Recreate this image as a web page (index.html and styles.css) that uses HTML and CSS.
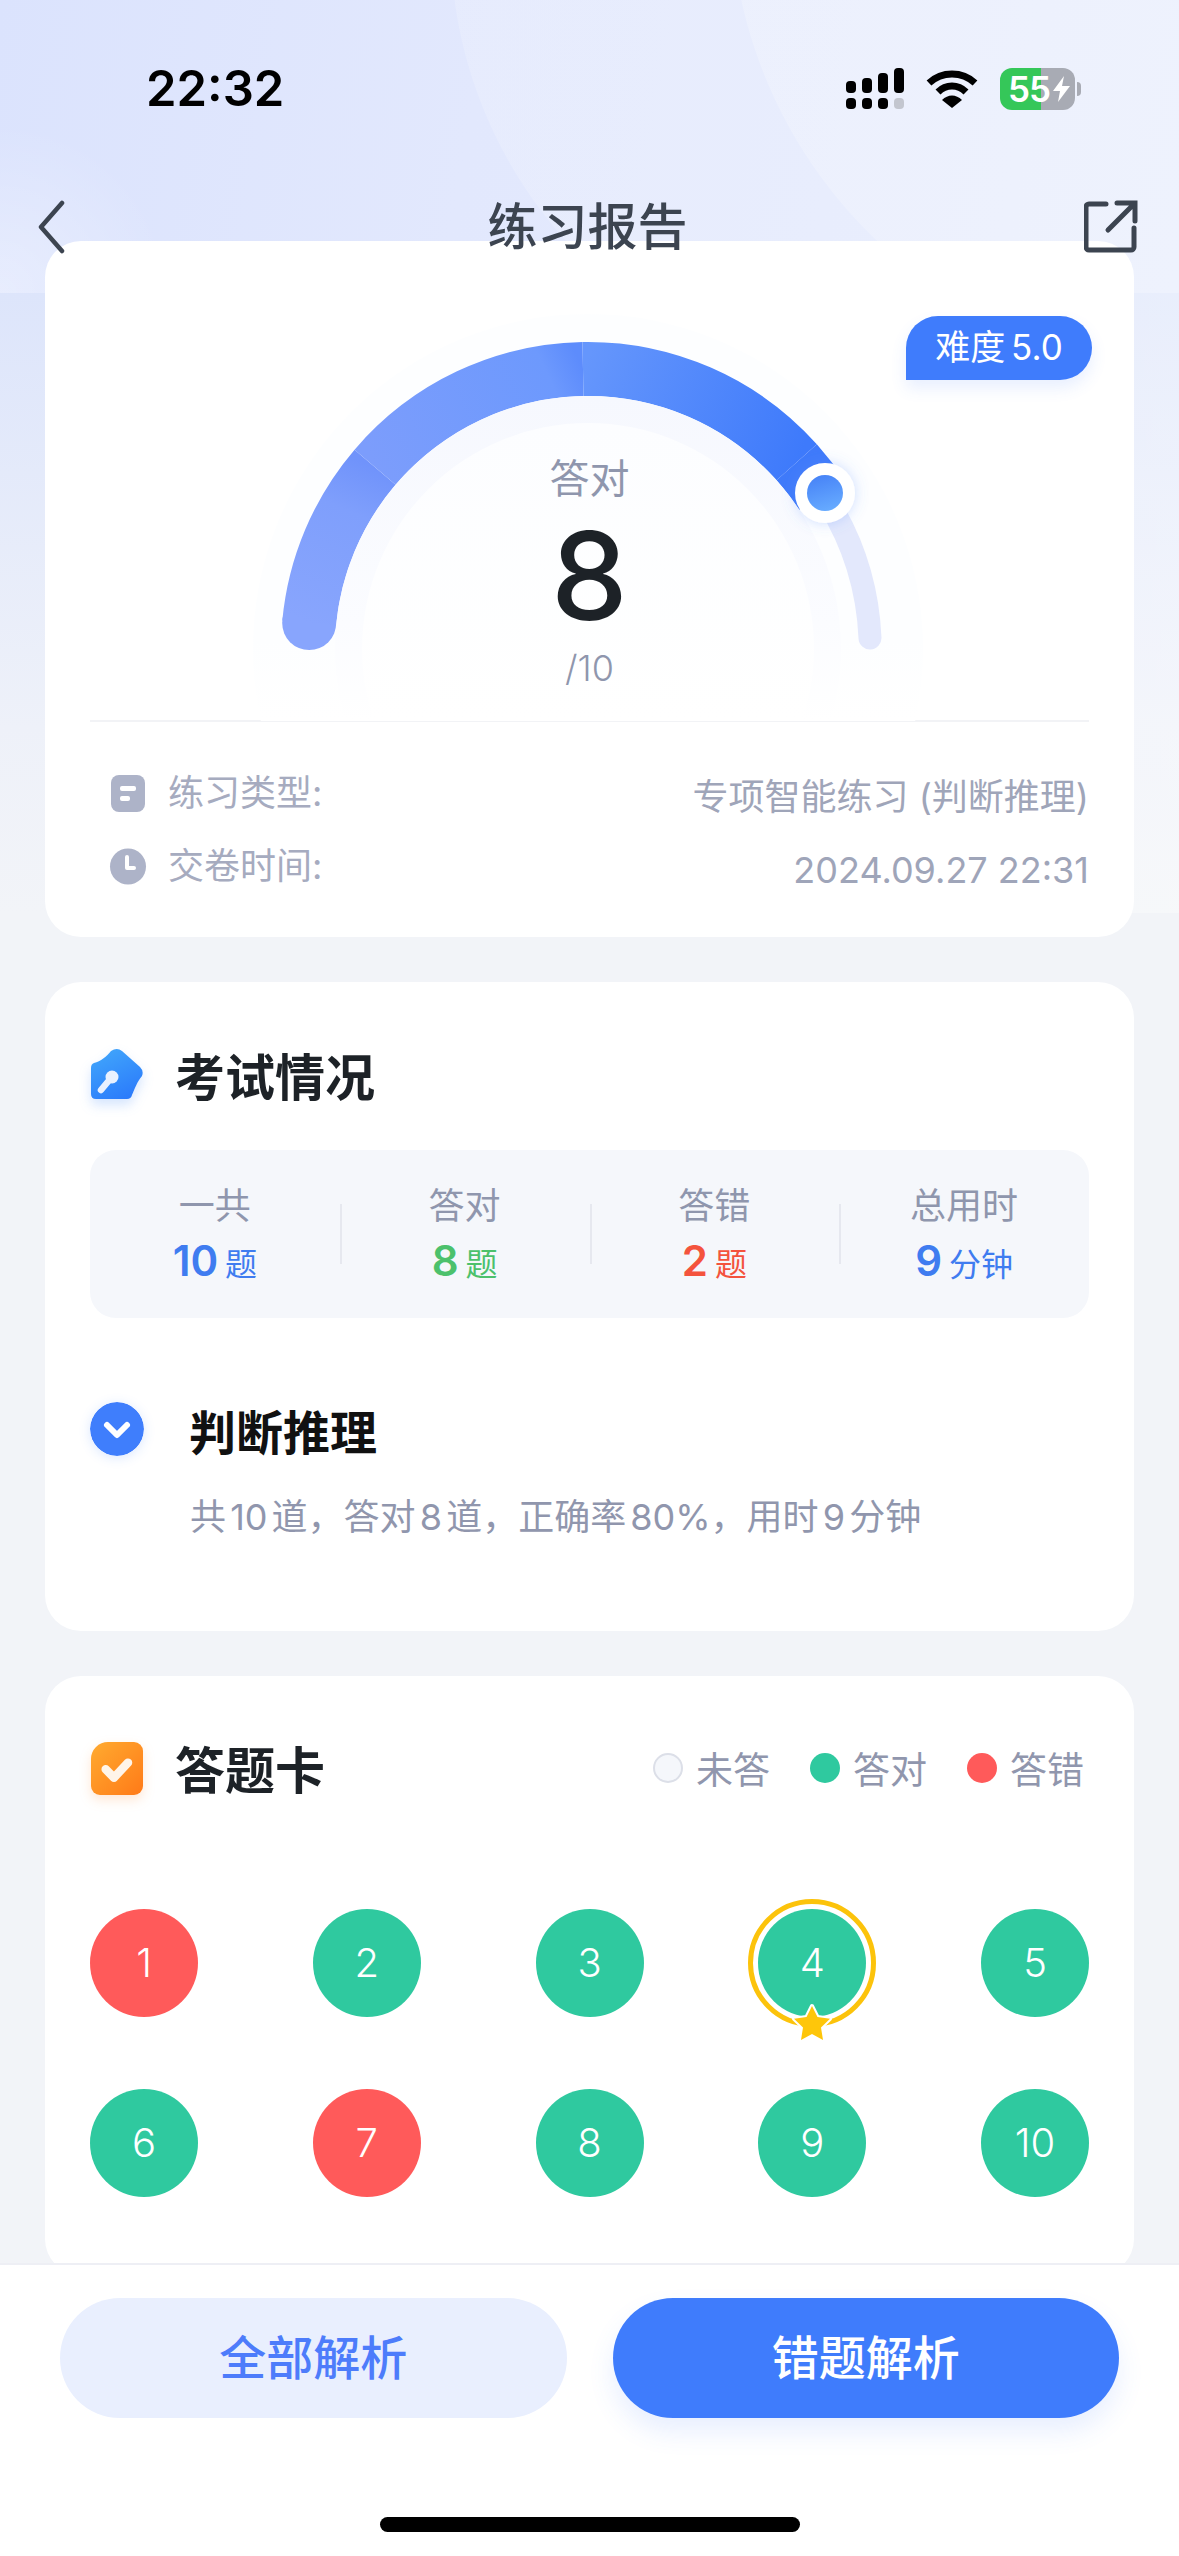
FILE: index.html
```html
<!DOCTYPE html>
<html lang="zh-CN">
<head>
    <meta charset="UTF-8">
    <title>练习报告</title>
    <link rel="stylesheet" href="styles.css">
</head>
<body>
<div id="page">
    <div class="top">
        <div class="status">
            <span class="clock">22:32</span>
            <div class="status-icons">
                <svg class="signal" width="60" height="42" viewBox="0 0 60 42">
                    <rect x="0" y="13" width="10" height="12" rx="4"/>
                    <rect x="16" y="10" width="10" height="15" rx="4"/>
                    <rect x="32" y="5" width="10" height="20" rx="4"/>
                    <rect x="48" y="0" width="10" height="25" rx="4"/>
                    <rect x="0" y="30" width="10" height="11" rx="4"/>
                    <rect x="16" y="30" width="10" height="11" rx="4"/>
                    <rect x="32" y="30" width="10" height="11" rx="4"/>
                    <rect x="48" y="30" width="10" height="11" rx="4" fill="#c3c6cf"/>
                </svg>
                <svg class="wifi" width="52" height="38" viewBox="0 0 52 38">
                    <path d="M3 13 C16 1 36 1 49 13" fill="none" stroke="#000" stroke-width="7"/>
                    <path d="M12 22 C20 14 32 14 40 22" fill="none" stroke="#000" stroke-width="7"/>
                    <path d="M16 30 C22 24 30 24 36 30 L26 38 Z"/>
                </svg>
                <div class="battery">
                    <div class="battery-body">
                        <span class="battery-num">55</span>
                        <svg class="bolt" width="17" height="26" viewBox="0 0 17 26"><path d="M11 0 L0 15 H7 L5 26 L17 10 H9 Z" fill="#fff"/></svg>
                    </div>
                    <i class="battery-tip"></i>
                </div>
            </div>
        </div>
        <div class="nav">
            <svg class="nav-back" width="28" height="54" viewBox="0 0 28 54"><path d="M25 3 L4 27 L25 51" fill="none" stroke="#3c4450" stroke-width="4.5" stroke-linecap="round" stroke-linejoin="round"/></svg>
            <h1 class="nav-title">练习报告</h1>
            <svg class="nav-share" width="54" height="54" viewBox="0 0 54 54">
                <path d="M22 4 H5 a3 3 0 0 0 -3 3 V47 a3 3 0 0 0 3 3 H47 a3 3 0 0 0 3 -3 V28" fill="none" stroke="#3c4450" stroke-width="5" stroke-linecap="round"/>
                <path d="M24 30 L49 5 M33 3 H51 V21" fill="none" stroke="#3c4450" stroke-width="5" stroke-linecap="round"/>
            </svg>
        </div>
    </div>

    <div class="main">
        <section class="card card-report">
            <div class="gauge">
                <svg class="gauge-bg" width="1089" height="480" viewBox="0 0 1089 480">
                    <defs>
                        <linearGradient id="fade1" gradientUnits="userSpaceOnUse" x1="0" y1="70" x2="0" y2="480">
                            <stop offset="0" stop-color="#fdfeff"/><stop offset="0.8" stop-color="#fdfeff"/><stop offset="1" stop-color="#fff"/>
                        </linearGradient>
                        <linearGradient id="fade2" gradientUnits="userSpaceOnUse" x1="0" y1="155" x2="0" y2="480">
                            <stop offset="0" stop-color="#f6f8fe"/><stop offset="0.7" stop-color="#fbfcff"/><stop offset="1" stop-color="#fff"/>
                        </linearGradient>
                        <linearGradient id="fade3" gradientUnits="userSpaceOnUse" x1="0" y1="182" x2="0" y2="480">
                            <stop offset="0" stop-color="#fcfdff"/><stop offset="1" stop-color="#fff"/>
                        </linearGradient>
                        <linearGradient id="seg1" gradientUnits="userSpaceOnUse" x1="264" y1="382" x2="330" y2="226">
                            <stop offset="0" stop-color="#88a5fd"/><stop offset="0.7" stop-color="#7f9ffc"/><stop offset="1" stop-color="#7093fb"/>
                        </linearGradient>
                        <linearGradient id="seg2" gradientUnits="userSpaceOnUse" x1="330" y1="226" x2="538" y2="128">
                            <stop offset="0" stop-color="#7c9dfc"/><stop offset="0.85" stop-color="#6d99fd"/><stop offset="1" stop-color="#5d8cfc"/>
                        </linearGradient>
                        <linearGradient id="seg3" gradientUnits="userSpaceOnUse" x1="538" y1="128" x2="752" y2="221">
                            <stop offset="0" stop-color="#6596fc"/><stop offset="1" stop-color="#3e7afb"/>
                        </linearGradient>
                        <linearGradient id="knob" x1="0.3" y1="0" x2="0.6" y2="1">
                            <stop offset="0" stop-color="#4783f7"/><stop offset="1" stop-color="#67abff"/>
                        </linearGradient>
                        <filter id="glow" x="-50%" y="-50%" width="200%" height="200%">
                            <feDropShadow dx="0" dy="0" stdDeviation="7" flood-color="#5b8dfb" flood-opacity="0.3"/>
                        </filter>
                    </defs>
                    <circle cx="543" cy="408" r="335" fill="url(#fade1)"/>
                    <path d="M778 253 A282 282 0 0 1 825 397" fill="none" stroke="#e3e8fc" stroke-width="23" stroke-linecap="round"/>
                    <circle cx="264.2" cy="382.1" r="27" fill="#88a5fd"/>
                    <path d="M264.2 382.1 A280 280 0 0 1 330.1 226.2" fill="none" stroke="url(#seg1)" stroke-width="54"/>
                    <path d="M330.1 226.2 A280 280 0 0 1 538 128" fill="none" stroke="url(#seg2)" stroke-width="54"/>
                    <path d="M538 128 A280 280 0 0 1 751.7 221.3" fill="none" stroke="url(#seg3)" stroke-width="54"/>
                    <path d="M751.7 221.3 A280 280 0 0 1 776.8 254" fill="none" stroke="#3f7afa" stroke-width="54"/>
                    <circle cx="543" cy="408" r="253" fill="url(#fade2)"/>
                    <circle cx="543" cy="408" r="226" fill="url(#fade3)"/>
                    <circle cx="780" cy="252" r="30" fill="#fff" filter="url(#glow)"/>
                    <circle cx="780" cy="252" r="18" fill="url(#knob)"/>
                </svg>
                <div class="badge">难度 5.0</div>
                <div class="gauge-text">
                    <span class="gauge-label">答对</span>
                    <span class="gauge-num">8</span>
                    <span class="gauge-total">/10</span>
                </div>
            </div>
            <div class="info">
                <div class="info-row">
                    <svg class="info-icon" width="34" height="37" viewBox="0 0 34 37">
                        <rect x="0" y="0" width="34" height="37" rx="8" fill="#adb3c8"/>
                        <rect x="9" y="11" width="16" height="5" rx="2" fill="#fff"/>
                        <rect x="9" y="21" width="10" height="5" rx="2" fill="#fff"/>
                    </svg>
                    <span class="info-key">练习类型:</span>
                    <span class="info-val">专项智能练习 (判断推理)</span>
                </div>
                <div class="info-row">
                    <svg class="info-icon" width="34" height="37" viewBox="0 0 34 37">
                        <circle cx="17" cy="18.5" r="18" fill="#adb3c8"/>
                        <path d="M16 9 V20 H23" fill="none" stroke="#fff" stroke-width="4" stroke-linecap="round" stroke-linejoin="round"/>
                    </svg>
                    <span class="info-key">交卷时间:</span>
                    <span class="info-val">2024.09.27 22:31</span>
                </div>
            </div>
        </section>

        <section class="card card-exam">
            <div class="card-head">
                <svg class="head-icon icon-key" width="54" height="54" viewBox="0 0 54 54">
                    <defs>
                        <linearGradient id="houseBlue" x1="0.2" y1="0" x2="0.7" y2="1">
                            <stop offset="0" stop-color="#41a6fb"/><stop offset="1" stop-color="#2b7bfb"/>
                        </linearGradient>
                    </defs>
                    <path d="M4 15 C11 13 16 9 21 3 Q27 -1 32 3 L50 19 Q54 23 52 28 C47 34 45 40 42 47 Q41 51 37 51 H6 Q1 51 1 46 V20 Q1 16 4 15 Z" fill="url(#houseBlue)"/>
                    <circle cx="22" cy="29" r="6.5" fill="#e9f1ff"/>
                    <path d="M21 30 L11 42" stroke="#e9f1ff" stroke-width="6.5" stroke-linecap="round"/>
                </svg>
                <h2 class="head-title">考试情况</h2>
            </div>
            <div class="stats">
                <div class="stat">
                    <span class="stat-label">一共</span>
                    <span class="stat-val blue"><b>10</b> 题</span>
                </div>
                <div class="stat">
                    <span class="stat-label">答对</span>
                    <span class="stat-val green"><b>8</b> 题</span>
                </div>
                <div class="stat">
                    <span class="stat-label">答错</span>
                    <span class="stat-val red"><b>2</b> 题</span>
                </div>
                <div class="stat">
                    <span class="stat-label">总用时</span>
                    <span class="stat-val blue"><b>9</b> 分钟</span>
                </div>
            </div>
            <div class="topic">
                <svg class="topic-icon" width="54" height="54" viewBox="0 0 54 54">
                    <circle cx="27" cy="27" r="27" fill="#3f7efc"/>
                    <path d="M17 23 L27 33 L37 23" fill="none" stroke="#fff" stroke-width="6" stroke-linecap="round" stroke-linejoin="round"/>
                </svg>
                <span class="topic-name">判断推理</span>
            </div>
            <p class="topic-sub">共 10 道，答对 8 道，正确率 80%，用时 9 分钟</p>
        </section>

        <section class="card card-sheet">
            <div class="card-head">
                <svg class="head-icon icon-check" width="54" height="54" viewBox="0 0 54 54">
                    <defs>
                        <linearGradient id="boxOrange" x1="0" y1="0" x2="1" y2="1">
                            <stop offset="0" stop-color="#ffab30"/><stop offset="1" stop-color="#ff7a18"/>
                        </linearGradient>
                    </defs>
                    <path d="M1 18 a17 17 0 0 1 17 -17 H44 a9 9 0 0 1 9 9 V45 a9 9 0 0 1 -9 9 H10 a9 9 0 0 1 -9 -9 Z" fill="url(#boxOrange)"/>
                    <path d="M15.7 28.3 L24 36.7 L38 21.7" fill="none" stroke="#fff" stroke-opacity="0.9" stroke-width="8.5" stroke-linecap="round" stroke-linejoin="round"/>
                </svg>
                <h2 class="head-title">答题卡</h2>
                <div class="legend">
                    <span class="legend-item"><i class="dot dot-none"></i>未答</span>
                    <span class="legend-item"><i class="dot dot-right"></i>答对</span>
                    <span class="legend-item"><i class="dot dot-wrong"></i>答错</span>
                </div>
            </div>
            <div class="sheet">
                <div class="q wrong">1</div>
                <div class="q right">2</div>
                <div class="q right">3</div>
                <div class="q right marked">4
                    <svg class="star" width="44" height="42" viewBox="0 0 44 42"><path d="M22 4 L27.5 15 L40 16.8 L31 25.5 L33 38 L22 32 L11 38 L13 25.5 L4 16.8 L16.5 15 Z" fill="#fec60a" stroke="#fff" stroke-width="4" stroke-linejoin="round" paint-order="stroke"/></svg>
                </div>
                <div class="q right">5</div>
                <div class="q right">6</div>
                <div class="q wrong">7</div>
                <div class="q right">8</div>
                <div class="q right">9</div>
                <div class="q right">10</div>
            </div>
        </section>
    </div>

    <div class="footer">
        <div class="btns">
            <div class="btn btn-light">全部解析</div>
            <div class="btn btn-blue">错题解析</div>
        </div>
        <div class="home-bar"></div>
    </div>
</div>
</body>
</html>
```

FILE: styles.css
```css
*{ margin:0; padding:0; box-sizing:border-box; }
body{
    width: 1179px;
    height: 2556px;
    overflow: hidden;
    font-family: Inter,"Noto Sans CJK SC",sans-serif;
}
i{ font-style: normal; display: block; }

#page{
    display: flex;
    flex-direction: column;
    width: 1179px;
    height: 2556px;
    background-color: #f2f4f8;
    background-image:
        radial-gradient(circle 470px at 1200px -100px, rgba(255,255,255,.2) 99.8%, rgba(255,255,255,0) 100%),
        radial-gradient(circle 450px at 900px -60px, rgba(255,255,255,.16) 99.8%, rgba(255,255,255,0) 100%),
        radial-gradient(circle 170px at 0 293px, rgba(255,255,255,.35), rgba(255,255,255,0)),
        linear-gradient(100deg, #dbe3fd 0%, #e2e8fd 40%, #e6ecfd 100%),
        linear-gradient(90deg, rgba(255,255,255,0) 0%, rgba(255,255,255,.35) 100%),
        linear-gradient(180deg, #dde5fb 0%, #eef1f9 70%, #f2f4f8 100%);
    background-size: 100% 293px, 100% 293px, 100% 293px, 100% 293px, 100% 620px, 100% 620px;
    background-position: 0 0, 0 0, 0 0, 0 0, 0 293px, 0 293px;
    background-repeat: no-repeat;
}

/* top */
.top{
    position: relative;
    z-index: 2;
    height: 241px;
    flex-shrink: 0;
}
.status{
    display: flex;
    justify-content: space-between;
    align-items: center;
    height: 42px;
    padding: 0 98px 0 146px;
    position: relative;
    top: 68px;
}
.clock{
    font-size: 49px;
    font-weight: 600;
    line-height: 42px;
    color: #000;
}
.status-icons{
    display: flex;
    align-items: center;
}
.signal{ margin-right: 20px; }
.wifi{ margin-right: 22px; }
.battery{
    display: flex;
    align-items: center;
}
.battery-body{
    display: flex;
    align-items: center;
    width: 75px;
    height: 42px;
    padding-left: 8px;
    border-radius: 12px;
    background: linear-gradient(90deg, #35c759 55%, #a8abb4 55%);
}
.battery-num{
    width: 45px;
    font-size: 35px;
    font-weight: 600;
    line-height: 42px;
    letter-spacing: -1px;
    color: #fff;
}
.battery-tip{
    width: 4px;
    height: 14px;
    margin-left: 2px;
    border-radius: 0 4px 4px 0;
    background: #a8abb4;
}
.nav{
    display: grid;
    grid-template-columns: 1fr auto 1fr;
    align-items: center;
    height: 54px;
    padding: 0 41px 0 37px;
    position: relative;
    top: 158px;
}
.nav-share{ justify-self: end; }
.nav-title{
    font-size: 50px;
    font-weight: 500;
    line-height: 54px;
    color: #3c4450;
}

/* cards */
.main{
    flex: 1;
    min-height: 0;
    overflow: hidden;
    display: flex;
    flex-direction: column;
    gap: 45px;
    padding: 0 45px;
}
.card{
    flex-shrink: 0;
    padding: 0 45px;
    border-radius: 36px;
    background: #fff;
}
.card-report{
    height: 696px;
    padding: 0;
}
.card-exam{
    height: 649px;
    padding-top: 66px;
}
.card-sheet{
    height: 599px;
    padding-top: 65px;
}

/* gauge */
.gauge{
    position: relative;
    height: 481px;
    border-bottom: 2px solid #f2f3f6;
    margin: 0 45px;
}
.gauge-bg{
    position: absolute;
    left: -45px;
    top: 0;
}
.badge{
    position: absolute;
    right: -3px;
    top: 75px;
    width: 186px;
    height: 64px;
    border-radius: 32px 32px 32px 0;
    box-shadow: 0 8px 16px rgba(63,124,252,.12);
    background: #3f7cfc;
    font-size: 35px;
    word-spacing: -4px;
    line-height: 62px;
    text-align: center;
    color: #fff;
}
.gauge-text{
    position: absolute;
    left: 0;
    right: 0;
    top: 218px;
    display: flex;
    flex-direction: column;
    align-items: center;
}
.gauge-label{
    font-size: 40px;
    line-height: 40px;
    color: #8f96ad;
}
.gauge-num{
    margin-top: 17px;
    font-size: 122px;
    font-weight: 500;
    line-height: 120px;
    color: #1d2227;
}
.gauge-total{
    margin-top: 12px;
    font-size: 36px;
    font-weight: 300;
    line-height: 40px;
    color: #8f96ad;
}

.info{
    display: flex;
    flex-direction: column;
    gap: 33px;
    padding: 51px 45px 0 66px;
}
.info-row{
    display: flex;
    align-items: center;
    height: 40px;
}
.info-icon{
    flex-shrink: 0;
    overflow: visible;
}
.info-key{
    margin-left: 23px;
    font-size: 36px;
    line-height: 40px;
    color: #a6abbf;
}
.info-val{
    margin-left: auto;
    position: relative;
    top: 4px;
    font-size: 36px;
    line-height: 40px;
    color: #9fa5b9;
}

/* exam */
.card-head{
    display: flex;
    align-items: center;
    height: 54px;
}
.head-icon{ flex-shrink: 0; }
.icon-key{ filter: drop-shadow(0 6px 6px rgba(43,123,251,.2)); }
.icon-check{ filter: drop-shadow(0 5px 6px rgba(255,122,24,.18)); }
.head-title{
    margin-top: 5px;
    margin-left: 31px;
    font-size: 50px;
    font-weight: 700;
    line-height: 52px;
    color: #1d2227;
}
.stats{
    display: grid;
    grid-template-columns: repeat(4,1fr);
    height: 168px;
    margin-top: 48px;
    padding-top: 36px;
    border-radius: 26px;
    background: #f5f7fb;
}
.stat{
    display: flex;
    flex-direction: column;
    align-items: center;
    gap: 12px;
    height: 100px;
    position: relative;
}
.stat + .stat::before{
    content: "";
    position: absolute;
    left: 0;
    top: 18px;
    width: 2px;
    height: 60px;
    background: #e6e8ef;
}
.stat-label{
    font-size: 36px;
    line-height: 40px;
    color: #8f96ad;
}
.stat-val{
    font-size: 32px;
    word-spacing: -2px;
    line-height: 46px;
}
.stat-val b{
    font-size: 42px;
    font-weight: 600;
}
.blue{ color: #3f7cf0; }
.green{ color: #4cc16c; }
.red{ color: #f4533d; }

.topic{
    display: flex;
    align-items: center;
    height: 54px;
    margin-top: 84px;
}
.topic-icon{
    flex-shrink: 0;
    border-radius: 50%;
    box-shadow: 0 2px 12px rgba(63,126,252,.18);
}
.topic-name{
    margin-left: 45px;
    font-size: 47px;
    font-weight: 700;
    color: #111;
}
.topic-sub{
    margin-top: 41px;
    padding-left: 100px;
    font-size: 36px;
    word-spacing: -6px;
    line-height: 40px;
    white-space: nowrap;
    color: #9096ad;
}

/* sheet */
.legend{
    display: flex;
    align-items: center;
    gap: 40px;
    margin-left: auto;
    padding-right: 5px;
}
.legend-item{
    display: flex;
    align-items: center;
    gap: 13px;
    font-size: 37px;
    color: #9096ad;
}
.dot{
    width: 30px;
    height: 30px;
    border-radius: 50%;
}
.dot-none{
    border: 2px solid #dcdfe8;
    background: #f5f7fb;
}
.dot-right{ background: #2fc99f; }
.dot-wrong{ background: #ff5a5a; }
.sheet{
    display: grid;
    grid-template-columns: repeat(5,108px);
    justify-content: space-between;
    row-gap: 72px;
    margin-top: 114px;
}
.q{
    position: relative;
    width: 108px;
    height: 108px;
    border-radius: 50%;
    font-size: 40px;
    font-weight: 300;
    line-height: 108px;
    text-align: center;
    color: #fff;
}
.right{ background: #2fc99f; }
.wrong{ background: #ff5a5a; }
.marked::before{
    content: "";
    box-sizing: border-box;
    position: absolute;
    left: -10px;
    top: -10px;
    width: 128px;
    height: 128px;
    border: 5px solid #fcc30b;
    border-radius: 50%;
}
.star{
    position: absolute;
    left: 32px;
    top: 93px;
}

/* footer */
.footer{
    position: relative;
    flex-shrink: 0;
    height: 293px;
    border-top: 2px solid #eeeff5;
    background: #fff;
}
.btns{
    display: flex;
    gap: 46px;
    padding: 33px 60px 0;
}
.btn{
    flex: 1;
    height: 120px;
    border-radius: 60px;
    font-size: 47px;
    font-weight: 500;
    line-height: 120px;
    text-align: center;
}
.btn-light{
    background: #e9effe;
    color: #4d7cfb;
}
.btn-blue{
    background: #3f7cfc;
    box-shadow: 0 14px 26px rgba(63,124,252,.12);
    color: #fff;
}
.home-bar{
    width: 420px;
    height: 15px;
    margin: 99px auto 0;
    border-radius: 8px;
    background: #000;
}
```
